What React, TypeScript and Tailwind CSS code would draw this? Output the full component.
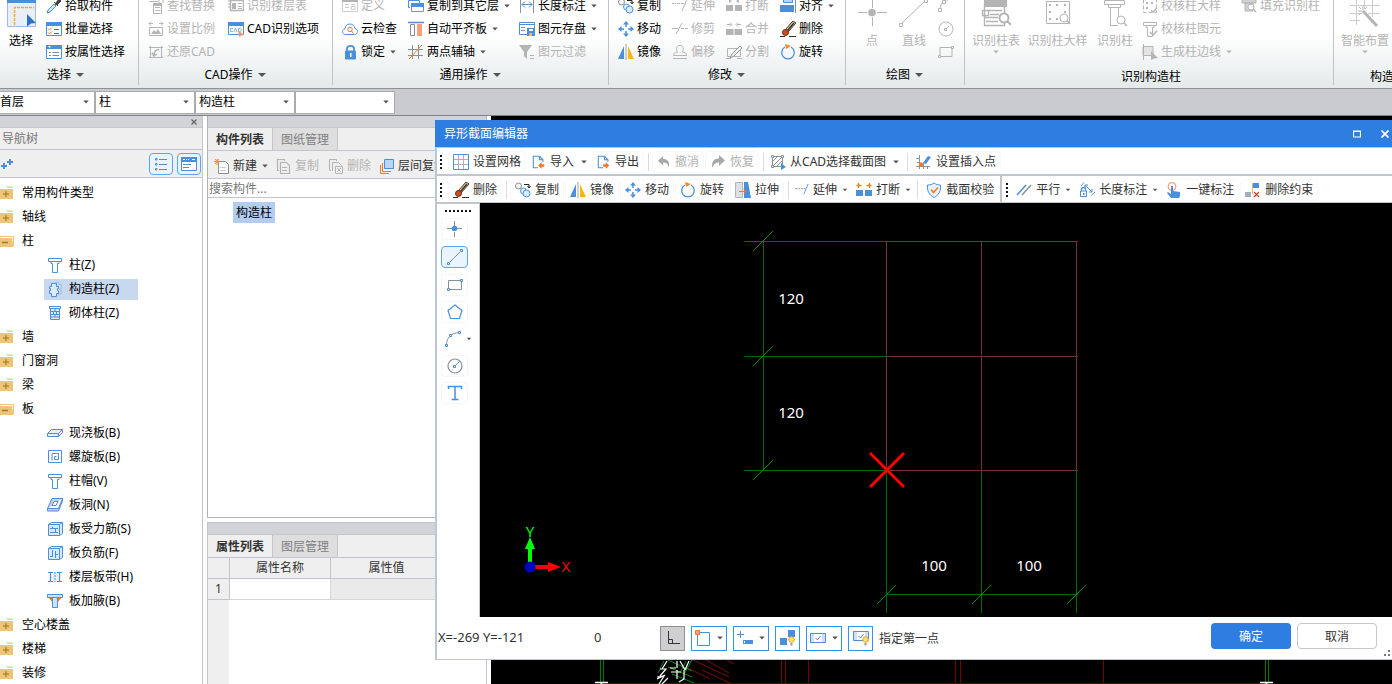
import { ReactNode } from 'react';
import clsx from 'clsx';

const BLUE = '#4a8fdc';
const GRAY = '#b4b4b4';
const SLATE = '#86919c';
const ORANGE = '#f0792a';

const column = (
  <>
    <path d="M1.5 1.5h13v3h-13z" fill="none" />
    <path d="M4 4.5v2h1.500v9h5v-9H12v-2" fill="none" />
  </>
);

const grid = <path d="M1 5.500h14M1 10.500h14M5.500 1v14M10.500 1v14" stroke="#a9b0b8" />;

// all of these are drawn in a 16x16 box
const icons: Record<string, ReactNode> = {
  picker: (
    <>
      <path d="M1 15l1-3 6-6 2 2-6 6z" fill="#dfe7f0" stroke={BLUE} />
      <path d="M8 4l4 4M9 6l4-5 2 2-4 4z" fill="#444" stroke="#444" />
    </>
  ),
  batch: (
    <>
      <path d="M.5 2.500h15v12H.5z" fill="#fff" stroke={BLUE} />
      <path d="M0 1h16v4H0z" fill={BLUE} />
      <path d="M2 7.500l1.500 1.500L6 6.500M2 11.500l1.500 1.500L6 10.500" stroke={ORANGE} fill="none" />
      <path d="M8 8.500h5M8 12.500h5" stroke="#667" />
    </>
  ),
  property: (
    <>
      <path d="M.5 2.500h15v12H.5z" fill="#fff" stroke={BLUE} />
      <path d="M0 1h16v4H0z" fill={BLUE} />
      <path d="M2 2h3L3.500 4z" fill="#fff" />
      <path d="M3 8.500h2M3 11.500h2M6.500 8.500H13M6.500 11.500H13" stroke="#789" />
    </>
  ),
  find: (
    <>
      <path d="M5.500 5.500h8v10h-8zM7 9.500h5M7 12.500h5M7 7.500h5M1 3.500h9M11 1v4M15 1v4" stroke={GRAY} fill="none" />
      <path d="M5 5h9v3H5z" fill={GRAY} />
    </>
  ),
  scale: (
    <>
      <path d="M1 2.500h4M11 2.500h4M3 .5L1 2.500l2 2M13 .5l2 2-2 2M1.500 6.500h13v8h-13z" stroke={GRAY} fill="none" />
      <path d="M3 13l3-4 2 2 2-3 3 5z" fill={GRAY} />
    </>
  ),
  restore: (
    <>
      <path d="M2.500 2v12M13.500 2v12M1 3.500h14M1 13.500h14" stroke={GRAY} fill="none" />
      <path d="M11 5.500c-3 0-5 2-5 6M4 9l2 3 3-2" stroke={GRAY} strokeWidth="1.500" fill="none" />
    </>
  ),
  floorTable: (
    <>
      <path d="M2.500 2.500h13v10h-13z" stroke={GRAY} fill="none" strokeWidth="1.500" />
      <path d="M0 3h2M0 6h2M0 9h2M10 5.500h4M10 8.500h4M10 10.500h4" stroke={GRAY} />
      <path d="M4 5h4v6H4z" fill={GRAY} />
    </>
  ),
  cadOptions: (
    <>
      <path d="M.5 3.500h15v10H.5z" fill="#fff" stroke={BLUE} />
      <path d="M0 1h16v4H0z" fill={BLUE} />
      <path d="M5 7.500H2.500v3H5M6 11l1.500-4L9 11M10.500 7.500v3h2l1-1.500-1-1.500z" stroke="#86b4ea" fill="none" />
      <path d="M10 9l6 5-3 .5-1.500 2z" fill="#fb9066" />
    </>
  ),
  define: (
    <>
      <path d="M.5 2.500h15v11H.5zM3 6.500h4M3 9.500h4M9 6.500h4M9 8.500h4v3H9z" stroke="#cdcdcd" fill="none" />
      <path d="M0 1h16v3H0z" fill={GRAY} />
    </>
  ),
  cloud: (
    <>
      <path d="M4 13.500C1.500 13.500.5 12 .5 10.500S2 8 3 8c0-3 2-5 5-5s4.500 2 5 4.500c1.500 0 2.500 1.500 2.500 3s-1 3-3 3z" fill="#fff" stroke={BLUE} />
      <circle cx="8" cy="8.500" r="2.200" fill="none" stroke={ORANGE} />
      <path d="M9.500 10l2 2.500" stroke={ORANGE} />
    </>
  ),
  lock: (
    <>
      <path d="M5 7V4.500C5 1 12 1 12 4.500V7" stroke={BLUE} strokeWidth="1.800" fill="none" />
      <rect x="3" y="6.500" width="11" height="9" rx="1" fill={BLUE} />
      <path d="M8 9h1.500v4H8z" fill="#fff" />
    </>
  ),
  copyFloor: (
    <>
      <path d="M.5 2.500h11v3M.5 2.500v7H2" stroke={BLUE} fill="none" />
      <path d="M3.500 5.500h12v8h-12z" fill="#fff" stroke={SLATE} />
      <path d="M3 5h13v4H3z" fill={BLUE} />
    </>
  ),
  alignSlab: (
    <>
      <path d="M0 1.500h16" stroke={BLUE} strokeWidth="1.500" />
      <path d="M2.500 3.500h4v11h-4z" stroke={SLATE} fill="none" />
      <path d="M9 3h5v12H9z" fill="#fb9f78" />
    </>
  ),
  axis: (
    <>
      <path d="M4.500 1v14M10.500 1v14M0 5.500h15M0 11.500h15" stroke={SLATE} />
      <path d="M1 15L14 1" stroke={ORANGE} />
    </>
  ),
  dimension: (
    <>
      <path d="M1.500 1v14M14.500 1v14" stroke={SLATE} />
      <path d="M3 6.500h10M6 3.500l-3 3 3 3M10 3.500l3 3-3 3" stroke={BLUE} fill="none" />
    </>
  ),
  save: (
    <>
      <path d="M.5 1.500h15v12H.5zM0 3.500h16" stroke={BLUE} fill="#fff" />
      <path d="M2 6.500h4M2 9.500h4" stroke={SLATE} />
      <path d="M8 7h8v8H8z" fill={BLUE} />
      <path d="M10 8h4v2h-4z" fill="#fff" />
      <path d="M10 12h3v3h-3z" fill="#f5b06a" />
    </>
  ),
  filter: (
    <>
      <path d="M0 1h13L8 8v7l-3-3V8z" fill={GRAY} />
      <path d="M11 11.500h4M11 14.500h4" stroke={GRAY} />
    </>
  ),
  copy: (
    <>
      <circle cx="3.500" cy="4" r="3" fill="#f4f4f4" stroke={SLATE} />
      <circle cx="8.500" cy="9" r="3" fill="#eaf3fc" stroke={BLUE} />
      <circle cx="11.500" cy="11.500" r="3.500" fill="#d8ebfb" stroke={BLUE} />
      <path d="M9 2.500h5V5M12.500 4l1.500 2 1.500-2" stroke="#222" fill="none" />
    </>
  ),
  move: (
    <>
      <path d="M8 0l3 3.500H5zM8 16l3-3.500H5zM0 8l3.500-3v6zM16 8l-3.500-3v6z" fill={BLUE} />
      <path d="M8 3v3M8 10v3M3 8h3M10 8h3" stroke={BLUE} strokeWidth="1.500" />
    </>
  ),
  mirror: (
    <>
      <path d="M6 2v13H0z" fill={BLUE} />
      <path d="M8 0v16" stroke="#9aa3ad" />
      <path d="M10 2v13h6z" fill="#fbb515" />
    </>
  ),
  extendGray: <path d="M0 5.500h4M5 5.500h3M9 5.500h3M10 13l5-12" stroke={GRAY} fill="none" />,
  trim: <path d="M0 7.500h6M9 7.500h3M13 7.500h3M4 13l6-11" stroke={GRAY} fill="none" />,
  offset: (
    <path d="M1 14.500h14M1.500 11.500c0-3 2-3 4-3C3 4 5 1.500 8 1.500S12 4 10.500 8c2 .5 4 .5 4 3.500zM4 11.500h8" stroke={GRAY} fill="none" />
  ),
  breakGray: <path d="M0 7h7v6H0zM9 7h7v6H9zM3 1l3 2-3 2zM13 1l-3 2 3 2zM0 2.500h4M12 2.500h4" fill={GRAY} />,
  merge: (
    <>
      <path d="M0 8h7.500v6H0zM8.500 8H16v6H8.500z" fill={GRAY} />
      <path d="M1 3.500h4M11 3.500h4M4 1.500l2 2-2 2M12 1.500l-2 2 2 2" stroke={GRAY} fill="none" />
    </>
  ),
  split: (
    <>
      <path d="M1.500 4.500h13v8h-13zM0 14.500h5M11 14.500h5" stroke={GRAY} fill="none" />
      <path d="M4 14l2-4 8-8 2 2-8 8z" fill="#eee" stroke="#999" />
    </>
  ),
  align: (
    <>
      <path d="M3.500.5h9v4h-9z" fill="#b7d3f5" stroke={BLUE} />
      <path d="M0 7h14v7H0z" fill={BLUE} />
      <path d="M15.500 0v15" stroke={SLATE} />
    </>
  ),
  erase: (
    <>
      <path d="M0 15.500h5M9 15.500h7" stroke="#333" />
      <path d="M5 9l8-9 3 2-8 9z" fill="#f1c79a" stroke="#4a3728" />
      <path d="M7.500 9.500L14 2" stroke="#333" strokeWidth="1.500" />
      <circle cx="5.500" cy="11.500" r="3" fill="#c9501f" stroke="#6b2a12" />
    </>
  ),
  rotate: (
    <>
      <path d="M5 3a6.300 6.300 0 1 0 6 0" fill="none" stroke={BLUE} strokeWidth="1.300" />
      <path d="M5 0l6 2-5 3z" fill="#f08a28" />
    </>
  ),
  smallArc: (
    <>
      <path d="M2 12C2 6 5 2 14 1" stroke={GRAY} fill="none" />
      <path d="M.5 10.500h3v3h-3zM4.500 2.500h3v3h-3z" fill="#fff" stroke={GRAY} />
    </>
  ),
  smallCircle: (
    <>
      <circle cx="8" cy="8" r="7" stroke={GRAY} fill="none" />
      <path d="M8 8l3-3M6.500 7.500h2v2h-2z" stroke={GRAY} fill="none" />
    </>
  ),
  smallRect: (
    <>
      <path d="M2 3.500h12v9H2z" stroke={GRAY} fill="none" />
      <path d="M.5 11.500h2v2h-2zM13.500 2.500h2v2h-2z" fill="#fff" stroke={GRAY} />
    </>
  ),
  checkDetail: (
    <>
      <path d="M1.500 1.500h13v13h-13z" stroke={GRAY} strokeDasharray="4 2" fill="none" />
      <path d="M4 4h2v2H4zM9 4h2v2H9zM4 9h2v2H4z" fill={GRAY} />
      <path d="M9 12l2 2 4-4" stroke={GRAY} strokeWidth="1.500" fill="none" />
    </>
  ),
  checkElement: (
    <>
      <g stroke={GRAY}>{column}</g>
      <path d="M8 11l3 3 4-4" stroke={GRAY} strokeWidth="1.500" fill="none" />
    </>
  ),
  edge: (
    <>
      <path d="M1.500 0v16M1 2.500h10v9H1z" stroke={GRAY} fill="#e4e4e4" />
      <path d="M9 7l7 7-4 .5-3 1.500z" fill={GRAY} />
    </>
  ),
  fillColumn: (
    <>
      <path d="M1 1h14v4H1zM4 5h8v8H4z" fill="#d2d2d2" stroke={GRAY} />
      <circle cx="10" cy="9" r="3" fill="#fff" stroke={GRAY} />
      <path d="M12 11l3 3" stroke={GRAY} strokeWidth="1.500" />
    </>
  ),
  column: <g stroke={BLUE}>{column}</g>,
  structColumn: (
    <>
      <path d="M8 1.500h4v2h2.500v4H13v2h1.500v3H12v2" stroke="#9cc4ee" fill="none" />
      <path d="M4.500 2.500h5v3h2v2h-1v2h1v3h-2v3h-5v-3h-2v-3h1v-2h-1v-2h2z" stroke={BLUE} fill="#dbe9f8" />
    </>
  ),
  masonry: (
    <>
      <path d="M3.500 3.500h9v11h-9z" stroke={BLUE} fill="#dceafa" />
      <path d="M2.500 1.500h11v2h-11z" stroke={BLUE} fill="#fff" />
      <path d="M4 6.500h8M4 9.500h8M4 12h8M8 4v2M6.500 7v2M9.500 7v2M8 10v2" stroke={BLUE} />
    </>
  ),
  slab: <path d="M.5 8.500l4-4h11l-4 4zM.5 8.500v3h11v-3M11.500 11.500l4-4v-3" stroke={BLUE} fill="#e3effb" />,
  spiral: <path d="M1.500 1.500h13v12h-13zM5 11.500V4.500h6.500v6H7.500v-3h2" stroke={BLUE} fill="none" />,
  hole: (
    <>
      <path d="M5 1.500h10.500l-4 10H.5zM.5 11.500v2.500h11l4-10V1.500" stroke={BLUE} fill="#b8d4f3" />
      <path d="M7 4.500h4l-2 4H5z" fill="#fff" stroke={BLUE} />
    </>
  ),
  rebar: (
    <>
      <path d="M1.500 3.500h11v11h-11zM1.500 3.500l3-2h11v11l-3 2M12.500 3.500l3-2" stroke={BLUE} fill="#dbe9f8" />
      <path d="M3 7.500h8M3 11.500h8M5.500 5.500v2M8.500 7.500v4" stroke={BLUE} />
    </>
  ),
  negRebar: (
    <>
      <path d="M1.500 3.500h11v11h-11zM1.500 3.500l3-2h11v11l-3 2M12.500 3.500l3-2" stroke={BLUE} fill="#dbe9f8" />
      <path d="M5.500 5v7M8.500 6v7M3 11.500h3M8 9.500h3" stroke={BLUE} />
    </>
  ),
  strip: (
    <>
      <path d="M2 3h12v10H2z" fill="#e6f0fb" />
      <path d="M1 3.500h5M10 3.500h5M1 12.500h5M10 12.500h5M3.500 3v10M12.500 3v10" stroke={BLUE} />
      <path d="M8 3v10" stroke={BLUE} strokeDasharray="2 1" />
    </>
  ),
  haunch: (
    <>
      <path d="M1 4l5 6V4zM15 4l-5 6V4z" fill="#f57c10" />
      <path d="M.5 1.500h15v3h-15zM5.500 4.500h5v10h-5z" stroke={BLUE} fill="#cfe2f7" />
    </>
  ),
  newItem: (
    <>
      <path d="M4.500 3.500h7l3 3v9h-10z" fill="#fff" stroke={SLATE} />
      <path d="M6 9.500h6M6 12.500h6" stroke="#c5ccd4" />
      <path d="M3 1v6M0 3.500h6M1 1l4 5M5 1L1 6" stroke="#f0922a" />
    </>
  ),
  copyDoc: (
    <path d="M3 12.500H1.500v-11h7V3M4.500 4.500h6l3 3v8h-9zM6 9.500h5M6 12.500h5" stroke={GRAY} strokeWidth="1.200" fill="none" />
  ),
  deleteDoc: (
    <path d="M3 12.500H1.500v-11h7V3M4.500 13V4.500h6l3 3M7.500 8.500h7v7h-7zM9 10l4 4M13 10l-4 4" stroke={GRAY} fill="none" />
  ),
  layers: (
    <>
      <path d="M1.500 7v8.500H10M3.500 5v8.500H12" stroke={ORANGE} fill="none" />
      <path d="M5.500 1.500h9v9h-9z" fill="#b9d6f6" stroke={BLUE} />
    </>
  ),
  grid: (
    <>
      {grid}
      <path d="M.5.5h15v15H.5z" stroke={BLUE} fill="none" />
    </>
  ),
  importDoc: (
    <>
      <path d="M7 14.500H1.500v-13h7l4 4V8M8.500 1.500v4h4" stroke={BLUE} fill="none" strokeWidth="1.200" />
      <path d="M7 12l4-4v2.500h3v3h-3V16z" fill={ORANGE} />
    </>
  ),
  exportDoc: (
    <>
      <path d="M7 14.500H1.500v-13h7l4 4V8M8.500 1.500v4h4" stroke={BLUE} fill="none" strokeWidth="1.200" />
      <path d="M14 12l-4-4v2.500H7v3h3V16z" fill={ORANGE} />
    </>
  ),
  undo: <path d="M7 1v3.500c5 0 8 3 6.500 9.500-1-4-3-5.500-6.500-5.500V12L1 6.500z" fill="#a9a9a9" />,
  redo: <path d="M9 1v3.500c-5 0-8 3-6.500 9.500 1-4 3-5.500 6.500-5.500V12l6-5.500z" fill="#a9a9a9" />,
  cadSection: (
    <>
      <path d="M2.500 2.500h10v10h-10z" fill="none" stroke={SLATE} />
      <path d="M3 7l4-4M3 12l9-9M7 12l5-5" stroke={SLATE} />
      <path d="M1.500 1.500h2v2h-2zM11.500 1.500h2v2h-2zM1.500 11.500h2v2h-2z" fill="#fff" stroke={SLATE} />
      <path d="M11 9l5 4-5 3z" fill={BLUE} />
    </>
  ),
  insertPoint: (
    <>
      <path d="M3.500 1v14M0 12.500h14M0 4.500h4M7.500 9v6M11.500 12v3M1 8.500h3" stroke={SLATE} />
      <path d="M7 9l5-7 3 1-5 7z" fill={BLUE} />
      <circle cx="5" cy="10.500" r="2.200" fill={ORANGE} />
    </>
  ),
  stretch: (
    <>
      <path d="M.5.5h7v15h-7z" fill="#dde1e6" stroke="#aeb6bf" />
      <path d="M9 0h4l3 16H9z" fill={BLUE} />
      <path d="M4 9.500h7M8.500 7l3 2.500-3 2.500" stroke={ORANGE} fill="none" />
    </>
  ),
  extend: (
    <>
      <path d="M0 6.500h3M4 6.500h2M7 6.500h2M10 6.500h2" stroke={SLATE} />
      <path d="M10 13l5-12" stroke={BLUE} />
    </>
  ),
  breakLine: (
    <>
      <path d="M0 8h7v6H0zM9 8h7v6H9z" fill={BLUE} />
      <path d="M.5 3.500h5M2.500 1v5M10.500 3.500h5M13.500 1v5" stroke="#d98a1e" strokeWidth="1.400" />
    </>
  ),
  shield: (
    <>
      <path d="M8 1c2 1.500 4 2 6.500 2 .5 6-1.500 10-6.500 12.500C3 13 1 9 1.500 3 4 3 6 2.500 8 1z" fill="#eaf3fc" stroke={BLUE} />
      <path d="M5 7.500l2.500 3L12 5.500" stroke={ORANGE} strokeWidth="1.500" fill="none" />
    </>
  ),
  parallel: (
    <>
      <path d="M1 13L10 3" stroke={BLUE} strokeWidth="1.500" />
      <path d="M6 13l9-10" stroke={SLATE} strokeWidth="1.500" />
    </>
  ),
  lockDim: (
    <>
      <path d="M2.500 9V7c0-2 4-2 4 0v2" stroke={BLUE} fill="none" strokeWidth="1.300" />
      <path d="M1.500 9h6v5.500h-6z" stroke={BLUE} fill="#fff" />
      <path d="M4 11h1.500v2H4z" fill={BLUE} />
      <path d="M2 4l3-3.500M12 13.500l4-3.500" stroke={SLATE} />
      <path d="M6 3l7 7M6 6V3h3M13 7v3h-3" stroke={BLUE} fill="none" />
    </>
  ),
  oneKey: (
    <>
      <circle cx="6" cy="4.500" r="3.800" fill="none" stroke="#f5a07c" strokeWidth="1.300" />
      <path d="M5 4h2v5l7 1v4l-1 2H5l-4-5 1-1 3 2z" fill={BLUE} />
    </>
  ),
  removeConstraint: (
    <>
      <path d="M7.500 1v11" stroke="#f0b070" />
      <path d="M8 1h6v5H8z" fill={BLUE} />
      <path d="M0 10h6v5H0z" fill="#a6adb6" />
      <path d="M9 10l5 5M14 10l-5 5" stroke="#d94030" strokeWidth="1.300" />
    </>
  ),
  point: (
    <>
      <path d="M7.500 0v5M7.500 11v5M0 7.500h5M10 7.500h5" stroke={SLATE} />
      <circle cx="7.500" cy="7.500" r="2.800" fill={BLUE} />
    </>
  ),
  line: (
    <>
      <path d="M3 13L13 3" stroke={SLATE} />
      <path d="M.5 13.500h2v2h-2zM13.500.5h2v2h-2z" fill="#fff" stroke={BLUE} />
    </>
  ),
  rect: (
    <>
      <path d="M1.500 3.500h13v9h-13z" stroke={SLATE} fill="none" />
      <path d="M.5 11.500h2v2h-2zM13.500 2.500h2v2h-2z" fill="#fff" stroke={BLUE} />
    </>
  ),
  pentagon: <path d="M8 1l7 5.500-2.500 8h-9L1 6.500z" stroke={BLUE} strokeWidth="1.200" fill="none" />,
  arc: (
    <>
      <path d="M1.500 14C1.500 7 6 2 14 1.500" stroke={SLATE} fill="none" />
      <path d="M.5 13.500h2v2h-2zM4.500 3.500h2v2h-2zM13.500.5h2v2h-2z" fill="#fff" stroke={BLUE} />
    </>
  ),
  circle: (
    <>
      <circle cx="8" cy="8" r="7" stroke={SLATE} fill="none" strokeWidth="1.200" />
      <path d="M8.500 7.500l4-4M6.500 7.500h2v2h-2z" stroke={BLUE} fill="none" />
    </>
  ),
  text: <path d="M1.500 4V1.500h13V4M8 1.500v13M4.500 14.500h7" stroke={BLUE} strokeWidth="1.500" fill="none" />,
  corner: <path d="M3.500 1v12.500H15M3.500 9.500h4v4" stroke="#333" fill="none" />,
  snapBox: (
    <>
      <path d="M2.500 2.500h12v13h-12z" stroke={BLUE} fill="none" />
      <path d="M.5.5h4v4h-4z" fill="#fb9f78" stroke={ORANGE} />
    </>
  ),
  inputPoint: (
    <>
      <path d="M3.500 1v7M0 4.500h7" stroke={BLUE} />
      <path d="M6 10h10v4H6z" fill={BLUE} />
      <path d="M7 11h1v2H7z" fill="#fff" />
    </>
  ),
  blocks: (
    <>
      <path d="M8 0h7v7H8zM0 8h7v7H0z" fill={BLUE} />
      <circle cx="11.500" cy="9.500" r="2.800" fill="#ffe27a" stroke="#e0a52c" />
      <path d="M10.500 13h2v2.500h-2z" fill="#999" />
    </>
  ),
  checkBox: (
    <>
      <path d="M.5 3.500h15v9H.5z" stroke={BLUE} fill="#cfe0f4" />
      <path d="M4 4h8v8H4z" fill="#fff" />
      <path d="M5.500 8l2 2 3-4" stroke={BLUE} fill="none" />
    </>
  ),
  checkBulb: (
    <>
      <path d="M.5 1.500h15v9H.5z" stroke={BLUE} fill="#cfe0f4" />
      <path d="M4 2h8v8H4z" fill="#fff" />
      <path d="M5.500 6l2 2 3-4" stroke={BLUE} fill="none" />
      <circle cx="12.500" cy="9.500" r="2.800" fill="#ffe27a" stroke="#e0a52c" />
      <path d="M11.500 13h2v2.500h-2z" fill="#999" />
    </>
  ),
};

// 30x30 box
const bigIcons: Record<string, ReactNode> = {
  select: (
    <>
      <path d="M1.500 3.500h28v26h-28z" fill="#e9eef8" stroke="#9fbbe0" />
      <path d="M1 0h29v6H1z" fill={BLUE} />
      <path d="M8.500 28V10.500H28" stroke="#eeb02a" strokeDasharray="3 1" strokeWidth="1.500" fill="none" />
      <path d="M21 17l9 9-5 .5-4 3z" fill="#2f72c4" />
    </>
  ),
  point: (
    <>
      <path d="M15.500 0v11M15.500 20v9M1 15.500h9M20 15.500h10" stroke={GRAY} />
      <circle cx="15" cy="15.500" r="3.800" fill={GRAY} />
    </>
  ),
  line: (
    <>
      <path d="M2 27L27 3" stroke={GRAY} />
      <path d="M.5 26.500h3v3h-3zM25.500 2.500h3v3h-3z" fill="#fff" stroke={GRAY} />
    </>
  ),
  table: (
    <>
      <path d="M3.500 6v22.500h20V6M1.500 13.500h6v5h-6zM7 13.500h14M9 17.500h9M3 20.500h14M5 24.500h12" stroke={GRAY} fill="none" strokeWidth="1.400" />
      <path d="M3 3h23v7H3z" fill={GRAY} />
      <circle cx="23" cy="21" r="4.500" fill="#fff" stroke={GRAY} strokeWidth="2" />
      <path d="M26 24l4 4" stroke={GRAY} strokeWidth="2" />
    </>
  ),
  detail: (
    <>
      <path d="M3.500 4.500h23v22h-23z" stroke={GRAY} fill="none" />
      <path d="M6 7h2v2H6zM13 7h2v2h-2zM21 7h2v2h-2zM6 14h2v2H6zM6 21h2v2H6zM13 21h2v2h-2zM21 14h2v2h-2z" fill={GRAY} />
      <circle cx="21" cy="21" r="4" fill="#fff" stroke={GRAY} />
      <path d="M24 24l3 3" stroke={GRAY} strokeWidth="1.500" />
    </>
  ),
  column: (
    <>
      <path d="M4.500 3.500h20v4h-20zM8.500 7.500h12v3h-12zM10.500 10.500V28.500H18M18.500 10.500V20" stroke={GRAY} fill="none" />
      <circle cx="21" cy="23" r="4" fill="#fff" stroke={GRAY} />
      <path d="M24 26l3 3" stroke={GRAY} strokeWidth="1.500" />
    </>
  ),
  smart: (
    <>
      <path d="M6.500 0v28M14.500 0v12M22.500 0v20M0 8.500h30M0 16.500h12M18 16.500h12M0 23.500h10" stroke="#ccc" />
      <path d="M13 14l14 15" stroke={GRAY} strokeWidth="3" />
      <path d="M13 9v4M8 14h4M17 10l-2 2M9 10l2 2M9 18l2-2" stroke={GRAY} />
    </>
  ),
};

type IconProps = { name: string; className?: string };

const Icon = ({ name, className = 'size-4' }: IconProps) => (
  <svg viewBox="0 0 16 16" className={clsx('shrink-0', className)} aria-hidden="true">
    {icons[name]}
  </svg>
);

const Caret = ({ className = 'w-2.5 text-[#555]' }: { className?: string }) => (
  <svg viewBox="0 0 10 6" className={clsx('h-1.5 shrink-0', className)} aria-hidden="true">
    <path d="M2.300 1.500h5.400L5 4.500z" fill="currentColor" />
  </svg>
);

type ToolProps = { icon: string; label: string; disabled?: boolean; caret?: boolean };

const RibbonTool = ({ icon, label, disabled, caret }: ToolProps) => (
  <button
    type="button"
    disabled={disabled}
    className="flex h-[23px] items-center gap-[3px] whitespace-nowrap disabled:text-[#b4b4b4]"
  >
    <Icon name={icon} />
    {label}
    {caret && <Caret className={clsx('w-2.5', disabled ? 'text-[#b4b4b4]' : 'text-[#555]')} />}
  </button>
);

const BigTool = ({ icon, label, disabled, caret, className }: ToolProps & { className: string }) => (
  <button
    type="button"
    disabled={disabled}
    className={clsx(
      'flex h-[69px] shrink-0 flex-col items-center whitespace-nowrap pt-[3px] disabled:text-[#b4b4b4]',
      className,
    )}
  >
    <svg viewBox="0 0 30 30" className="size-[30px]" aria-hidden="true">
      {bigIcons[icon]}
    </svg>
    <span className="mt-1.5">{label}</span>
    {caret && <Caret className="w-2.5 text-[#b4b4b4]" />}
  </button>
);

type GroupProps = {
  label: string;
  caret?: boolean;
  className: string;
  labelClass?: string;
  children: ReactNode;
};

const RibbonGroup = ({ label, caret = true, className, labelClass = 'justify-center pt-0.5', children }: GroupProps) => (
  <section className={clsx('flex shrink-0 flex-col justify-end border-r border-[#bfc3c6]', className)}>
    <div className="flex shrink-0">{children}</div>
    <div className={clsx('flex h-[22px] shrink-0 items-center gap-1 whitespace-nowrap', labelClass)}>
      {label}
      {caret && (
        <svg viewBox="0 0 10 6" className="h-1.5 w-2.5" aria-hidden="true">
          <path d="M1 1h8L5 5z" fill="#555" />
        </svg>
      )}
    </div>
  </section>
);

const ToolColumn = ({ tools, className }: { tools: ToolProps[]; className?: string }) => (
  <div className={clsx('flex flex-col items-start', className)}>
    {tools.map((tool) => (
      <RibbonTool key={tool.label} {...tool} />
    ))}
  </div>
);

const Ribbon = () => (
  <header className="flex h-[89px] shrink-0 overflow-hidden border-b border-[#8d9095] bg-linear-to-b from-white from-40% to-[#e4eaea] pb-[3px]">
    <RibbonGroup label="选择" className="w-[139px]" labelClass="justify-center pr-1.5 pt-0.5">
      <BigTool icon="select" label="选择" className="w-[42px]" />
      <ToolColumn
        className="ml-1"
        tools={[
          { icon: 'picker', label: '拾取构件' },
          { icon: 'batch', label: '批量选择' },
          { icon: 'property', label: '按属性选择' },
        ]}
      />
    </RibbonGroup>

    <RibbonGroup label="CAD操作" className="w-[194px]">
      <ToolColumn
        className="ml-[9px]"
        tools={[
          { icon: 'find', label: '查找替换', disabled: true },
          { icon: 'scale', label: '设置比例', disabled: true },
          { icon: 'restore', label: '还原CAD', disabled: true },
        ]}
      />
      <ToolColumn
        className="ml-[13px]"
        tools={[
          { icon: 'floorTable', label: '识别楼层表', disabled: true },
          { icon: 'cadOptions', label: 'CAD识别选项' },
        ]}
      />
    </RibbonGroup>

    <RibbonGroup label="通用操作" className="w-[276px]">
      <ToolColumn
        className="ml-[9px]"
        tools={[
          { icon: 'define', label: '定义', disabled: true },
          { icon: 'cloud', label: '云检查' },
          { icon: 'lock', label: '锁定', caret: true },
        ]}
      />
      <ToolColumn
        className="ml-2.5"
        tools={[
          { icon: 'copyFloor', label: '复制到其它层', caret: true },
          { icon: 'alignSlab', label: '自动平齐板', caret: true },
          { icon: 'axis', label: '两点辅轴', caret: true },
        ]}
      />
      <ToolColumn
        className="ml-[7px]"
        tools={[
          { icon: 'dimension', label: '长度标注', caret: true },
          { icon: 'save', label: '图元存盘', caret: true },
          { icon: 'filter', label: '图元过滤', disabled: true },
        ]}
      />
    </RibbonGroup>

    <RibbonGroup label="修改" className="w-[237px]">
      <div className="ml-[9px] flex gap-[11px]">
        <ToolColumn
          tools={[
            { icon: 'copy', label: '复制' },
            { icon: 'move', label: '移动' },
            { icon: 'mirror', label: '镜像' },
          ]}
        />
        <ToolColumn
          tools={[
            { icon: 'extendGray', label: '延伸', disabled: true },
            { icon: 'trim', label: '修剪', disabled: true },
            { icon: 'offset', label: '偏移', disabled: true },
          ]}
        />
        <ToolColumn
          tools={[
            { icon: 'breakGray', label: '打断', disabled: true },
            { icon: 'merge', label: '合并', disabled: true },
            { icon: 'split', label: '分割', disabled: true },
          ]}
        />
        <ToolColumn
          tools={[
            { icon: 'align', label: '对齐', caret: true },
            { icon: 'erase', label: '删除' },
            { icon: 'rotate', label: '旋转' },
          ]}
        />
      </div>
    </RibbonGroup>

    <RibbonGroup label="绘图" className="w-[119px]">
      <BigTool icon="point" label="点" className="ml-1 w-11" disabled />
      <BigTool icon="line" label="直线" className="w-10" disabled />
      <div className="ml-1 flex flex-col">
        {[
          ['smallArc', '弧线'],
          ['smallCircle', '圆'],
          ['smallRect', '矩形'],
        ].map(([icon, title]) => (
          <button key={icon} type="button" disabled aria-label={title} className="flex h-[23px] items-center">
            <Icon name={icon} />
          </button>
        ))}
      </div>
    </RibbonGroup>

    <RibbonGroup label="识别构造柱" caret={false} className="w-[369px]" labelClass="justify-center pl-1 pt-1.5">
      <BigTool icon="table" label="识别柱表" className="w-[62px]" disabled caret />
      <BigTool icon="detail" label="识别柱大样" className="w-[61px]" disabled />
      <BigTool icon="column" label="识别柱" className="w-[54px]" disabled />
      <ToolColumn
        tools={[
          { icon: 'checkDetail', label: '校核柱大样', disabled: true },
          { icon: 'checkElement', label: '校核柱图元', disabled: true },
          { icon: 'edge', label: '生成柱边线', disabled: true, caret: true },
        ]}
      />
      <ToolColumn
        className="ml-[7px]"
        tools={[{ icon: 'fillColumn', label: '填充识别柱', disabled: true }]}
      />
    </RibbonGroup>

    <RibbonGroup label="构造" caret={false} className="grow border-r-0" labelClass="pl-9 pt-1.5">
      <BigTool icon="smart" label="智能布置" className="w-[62px]" disabled caret />
    </RibbonGroup>
  </header>
);

const selectors = [
  { title: '楼层', value: '首层', className: 'w-[95px]' },
  { title: '构件类别', value: '柱', className: 'w-[100px]' },
  { title: '构件类型', value: '构造柱', className: 'w-[100px]' },
  { title: '构件', value: '', className: 'w-[100px]' },
];

const SelectorBar = () => (
  <div className="flex h-[27px] shrink-0 items-center border-b border-[#7f8388] bg-[#cacbd0]">
    {selectors.map(({ title, value, className }, index) => (
      <div key={title} className={clsx('grid items-center', className)}>
        <select
          aria-label={title}
          className={clsx(
            'col-start-1 row-start-1 h-[23px] w-full appearance-none border border-[#ababab] bg-white',
            index === 0 ? 'border-l-0 pl-0' : 'pl-[3px]',
          )}
        >
          <option>{value}</option>
        </select>
        <Caret className="pointer-events-none col-start-1 row-start-1 mr-1 w-2.5 justify-self-end text-[#555]" />
      </div>
    ))}
  </div>
);

type TreeNode = { label: string; icon?: string; open?: boolean; selected?: boolean };

const tree: TreeNode[] = [
  { label: '常用构件类型' },
  { label: '轴线' },
  { label: '柱', open: true },
  { label: '柱(Z)', icon: 'column' },
  { label: '构造柱(Z)', icon: 'structColumn', selected: true },
  { label: '砌体柱(Z)', icon: 'masonry' },
  { label: '墙' },
  { label: '门窗洞' },
  { label: '梁' },
  { label: '板', open: true },
  { label: '现浇板(B)', icon: 'slab' },
  { label: '螺旋板(B)', icon: 'spiral' },
  { label: '柱帽(V)', icon: 'column' },
  { label: '板洞(N)', icon: 'hole' },
  { label: '板受力筋(S)', icon: 'rebar' },
  { label: '板负筋(F)', icon: 'negRebar' },
  { label: '楼层板带(H)', icon: 'strip' },
  { label: '板加腋(B)', icon: 'haunch' },
  { label: '空心楼盖' },
  { label: '楼梯' },
  { label: '装修' },
];

const Folder = ({ open }: { open?: boolean }) => (
  <svg viewBox="0 0 14 14" className="size-3.5 shrink-0" aria-hidden="true">
    {open ? (
      <>
        <path d="M0 4V2.500h13.500V12" stroke="#eec47a" fill="none" />
        <path d="M0 4h12l1.500 9H0z" fill="#eec47a" />
        <path d="M2 8.500h6" stroke="#a5792a" strokeWidth="1.500" />
      </>
    ) : (
      <>
        <path d="M0 3h13v10H0zM6 1.500L7 .5h5l1 1.500z" fill="#eec47a" />
        <path d="M3 8h6M6 5v6" stroke="#b5862f" strokeWidth="1.500" />
      </>
    )}
  </svg>
);

const NavTree = () => (
  <aside className="flex w-[203px] shrink-0 flex-col border-r border-[#c3c5cc] bg-white">
    <div className="flex h-3 shrink-0 items-center justify-end border-b border-[#c6c7cf] bg-[#d2d3d9] pr-1">
      <button type="button" aria-label="关闭导航树">
        <svg viewBox="0 0 8 8" className="size-2" aria-hidden="true">
          <path d="M1.500 1.500l5 5M6.500 1.500l-5 5" stroke="#666" strokeWidth="1.300" />
        </svg>
      </button>
    </div>
    <h2 className="flex h-[22px] shrink-0 items-center border-b border-[#c3c5cc] bg-[#efefef] pl-0.5 text-[#777]">
      导航树
    </h2>
    <div className="flex h-7 shrink-0 items-center gap-1 border-b border-[#c3c5cc] bg-[#efefef] pr-px">
      <button type="button" aria-label="全部展开" className="mr-auto">
        <svg viewBox="0 0 14 12" className="h-3 w-3.5" aria-hidden="true">
          <path d="M1 8h6M4 5v6M7 4h6M10 1v6" stroke={BLUE} strokeWidth="2" />
        </svg>
      </button>
      <button type="button" aria-label="列表视图" className="flex h-[22px] w-6 items-center justify-center rounded-sm border border-[#58a6f2] bg-[#eaf4fe]">
        <svg viewBox="0 0 14 14" className="size-3.5" aria-hidden="true">
          <path d="M1.500 1.500h1.500v1.500H1.500zM1.500 6.500h1.500v1.500H1.500zM1.500 11.500h1.500v1.500H1.500zM5 2.500h8M5 7.500h8M5 12.500h8" stroke={BLUE} fill="none" />
        </svg>
      </button>
      <button type="button" aria-label="面板视图" className="flex h-[22px] w-6 items-center justify-center rounded-sm border border-[#58a6f2] bg-[#eaf4fe]">
        <svg viewBox="0 0 16 14" className="h-3.5 w-4" aria-hidden="true">
          <path d="M.5.5h15v13H.5z" fill="#fff" stroke={BLUE} />
          <path d="M0 0h16v5H0z" fill={BLUE} />
          <path d="M2 2.500h2M5 2.500h1M7 2.500h1M11 2.500h3" stroke="#fff" />
          <path d="M2 7.500h8M2 10.500h6" stroke={BLUE} />
        </svg>
      </button>
    </div>
    <ul className="min-h-0 grow overflow-hidden pt-[3px]">
      {tree.map(({ label, icon, open, selected }) => (
        <li key={label} className="flex h-6 items-center">
          {icon ? (
            <button
              type="button"
              className={clsx('ml-11 flex h-[21px] items-center gap-1.5 pl-[3px]', selected && 'w-[94px] bg-[#c8d8ef]')}
            >
              <Icon name={icon} />
              {label}
            </button>
          ) : (
            <button type="button" className="flex items-center gap-2" aria-expanded={!!open}>
              <Folder open={open} />
              {label}
            </button>
          )}
        </li>
      ))}
    </ul>
  </aside>
);

const PanelTabs = ({ tabs }: { tabs: string[] }) => (
  <div role="tablist" className="flex h-[23px] shrink-0 border-b border-[#c3c5cc] bg-[#efefef]">
    {tabs.map((tab, index) => (
      <button
        key={tab}
        type="button"
        role="tab"
        aria-selected={index === 0}
        className={clsx(
          'w-[65px] border-r border-[#c3c5cc] pt-px',
          index === 0 ? 'font-bold text-[#333]' : 'bg-[#dedede] text-[#808080]',
        )}
      >
        {tab}
      </button>
    ))}
  </div>
);

const PanelStrip = () => <div className="h-3 shrink-0 border-b border-[#c6c7cf] bg-[#d2d3d9]" />;

const ComponentPanels = () => (
  <div className="ml-1 flex w-[280px] shrink-0 flex-col overflow-hidden bg-white">
    <section className="flex h-[402px] flex-col border border-t-0 border-[#b0b2b8]">
      <PanelStrip />
      <PanelTabs tabs={['构件列表', '图纸管理']} />
      <div className="flex h-7 shrink-0 items-center gap-2.5 whitespace-nowrap border-b border-[#c3c5cc] bg-[#efefef] pl-1.5 pt-0.5 text-[#333]">
        <button type="button" className="flex items-center gap-[3px]">
          <Icon name="newItem" />
          新建
          <Caret />
        </button>
        <button type="button" disabled className="-ml-1 flex items-center gap-[3px] disabled:text-[#b4b4b4]">
          <Icon name="copyDoc" />
          复制
        </button>
        <button type="button" disabled className="-ml-px flex items-center gap-[3px] disabled:text-[#b4b4b4]">
          <Icon name="deleteDoc" />
          删除
        </button>
        <button type="button" className="-ml-0.5 flex items-center gap-[3px]">
          <Icon name="layers" />
          层间复制
        </button>
      </div>
      <input
        type="search"
        aria-label="搜索构件"
        placeholder="搜索构件..."
        className="h-[19px] shrink-0 border-b border-[#c3c5cc] bg-white pl-px outline-none placeholder:text-[#777]"
      />
      <ul className="pl-[25px] pt-1">
        <li className="w-fit bg-[#b3cdf0] px-[3px] leading-[21px]">构造柱</li>
      </ul>
    </section>

    <section className="mt-1 flex grow flex-col border-x border-t border-[#c3c5cc]">
      <PanelStrip />
      <PanelTabs tabs={['属性列表', '图层管理']} />
      <div className="flex grow flex-col bg-linear-to-r from-[#efefef] from-[21px] to-white to-[21px]">
        <table className="w-full table-fixed border-separate border-spacing-0 text-[#333]">
          <thead>
            <tr className="h-[21px] bg-[#efefef]">
              <th aria-label="序号" className="w-[22px] border-b border-r border-[#c3c5cc]" />
              <th className="w-[101px] border-b border-r border-[#c3c5cc] p-0 font-normal">属性名称</th>
              <th className="w-[112px] border-b border-r border-[#c3c5cc] p-0 font-normal">属性值</th>
              <th aria-label="附加" className="border-b border-[#c3c5cc]" />
            </tr>
          </thead>
          <tbody>
            <tr className="h-[21px]">
              <td className="border-b border-r border-[#c3c5cc] bg-[#efefef] p-0 text-center">1</td>
              <td className="border-b border-r border-[#d5d6da] bg-white" />
              <td className="border-b border-r border-[#d5d6da] bg-[#eaeaea]" />
              <td className="border-b border-[#d5d6da] bg-[#eaeaea]" />
            </tr>
          </tbody>
        </table>
      </div>
    </section>
  </div>
);

// main model view; only its lower edge shows under the editor window
const ModelView = () => (
  <main className="ml-1 flex min-w-0 grow items-end overflow-hidden bg-black">
    <svg width="901" height="24" viewBox="491 660 901 24" className="shrink-0" aria-hidden="true" fill="none">
      <path d="M600.500 660v24M603.500 660v24M1265.500 660v24M1268.500 660v24" stroke="#007a00" />
      <path d="M781.500 660v24M785.500 660v24M808.500 660v24M955.500 660v24M960.500 660v24M1103.500 660v24" stroke="#7d0000" />
      <path d="M603 683.500h662" stroke="#5a0000" />
      <path d="M706 660l23 13M693 660l36 17M702 670l30 14M727 660l7 4M686 667l24 12" stroke="#7a0c0c" />
      <path d="M668 660l24 11M668 667l24 10M672 674l22 9M664 661l-6 12M686 661l-6 12M692 660l-8 14" stroke="#0a8a1a" />
      <path
        d="M667 661l-5 8M660 669h6l-6 7M657 677l7-1-5 8M670 668h6M677 661v7M689 661l-4 9M680 661l5 9M671 672h10M677 670v9M684 670v9l-5 3M657 679l8-4M668 678l-6 6"
        stroke="#fff"
        strokeWidth="1.200"
      />
      <path d="M595 682.500h13M601.500 682v2M1260 682.500h13M1266.500 682v2" stroke="#fff" strokeWidth="1.500" />
    </svg>
  </main>
);

const EditorTool = ({ icon, label, disabled, caret, wide, slim }: ToolProps & { wide?: boolean; slim?: boolean }) => (
  <button
    type="button"
    disabled={disabled}
    className={clsx(
      'flex h-[22px] items-center gap-1 whitespace-nowrap rounded-sm border pl-1 disabled:text-[#b0b0b0]',
      caret ? 'border-transparent' : 'border-[#f8f8f8] pr-1',
    )}
  >
    <Icon name={icon} className={slim ? 'h-4 w-3.5' : 'size-4'} />
    {label}
    {caret && <Caret className={clsx('text-[#555]', wide ? 'w-3' : 'w-2')} />}
  </button>
);

const Separator = ({ tight }: { tight?: boolean }) => (
  <div className={clsx('ml-[3px] h-[18px] w-px bg-[#dcdcdc]', !tight && 'mr-0.5')} />
);

const Handle = ({ className }: { className?: string }) => (
  <svg viewBox="0 0 2 14" className={clsx('h-3.5 w-0.5 shrink-0', className)} aria-hidden="true">
    <path d="M0 0h2v2H0zM0 4h2v2H0zM0 8h2v2H0zM0 12h2v2H0z" fill="#111" />
  </svg>
);

const drawTools = [
  ['point', '点'],
  ['line', '直线'],
  ['rect', '矩形'],
  ['pentagon', '多边形'],
  ['arc', '弧'],
  ['circle', '圆'],
  ['text', '文字'],
];

const DrawToolStrip = () => (
  <div className="flex w-[43px] shrink-0 flex-col gap-[5px] border-r border-t border-[#c3c5cc] bg-white pl-1 pt-1.5">
    <svg viewBox="0 0 26 2" className="mb-px ml-1 h-0.5 w-[26px]" aria-hidden="true">
      <path d="M0 1h26" stroke="#111" strokeWidth="2" strokeDasharray="2 2" />
    </svg>
    {drawTools.map(([icon, title]) => (
      <div key={icon} className="flex items-center">
        <button
          type="button"
          aria-label={title}
          className={clsx(
            'flex h-[22px] shrink-0 items-center justify-center rounded-sm border',
            icon === 'line' && 'my-px border-[#58a6f2] bg-[#eaf4fe]',
            icon === 'arc' ? 'w-6 border-transparent' : 'w-[27px]',
            icon !== 'line' && icon !== 'arc' && 'border-[#f6f6f6]',
          )}
        >
          <Icon name={icon} />
        </button>
        {icon === 'arc' && <Caret className="w-2 text-[#555]" />}
      </div>
    ))}
  </div>
);

const xs = [407, 502, 597];
const ys = [38, 153, 267];

const SectionCanvas = () => (
  <div className="min-w-0 grow overflow-hidden bg-black">
    <svg className="h-full w-full" role="img" aria-label="截面图" fill="none" fontFamily='"Noto Sans", sans-serif'>
      <g stroke="#6f3434">
        {xs.map((x) => (
          <path key={x} d={`M${x - 1}.5 38v230`} />
        ))}
        {ys.map((y) => (
          <path key={y} d={`M407 ${y}.5h191`} />
        ))}
      </g>
      <g stroke="#006c00">
        {ys.map((y) => (
          <path key={y} d={`M264 ${y}.5h143`} />
        ))}
        <path d="M283.500 38v230" />
        {xs.map((x) => (
          <path key={x} d={`M${x - 1}.5 268v142`} />
        ))}
        <path d="M407 391.500h191" />
      </g>
      <g stroke="#009400">
        {ys.map((y) => (
          <path key={y} d={`M273 ${y + 10}l20-20`} />
        ))}
        {xs.map((x) => (
          <path key={x} d={`M${x - 10} 401l19-19`} />
        ))}
      </g>
      <g fill="#fff" fontSize="15" textAnchor="middle">
        <text x="311" y="101">120</text>
        <text x="311" y="215">120</text>
        <text x="454" y="368">100</text>
        <text x="549" y="368">100</text>
      </g>
      <path d="M390 250l34 34M424 250l-34 34" stroke="#f00" strokeWidth="3" />
      <path d="M48 346h4v14h-4zM50 334l5 12H45z" fill="#0f0" />
      <path d="M55 362h13v4H55zM81 364l-13 5v-10z" fill="#f00" />
      <circle cx="50" cy="364" r="5.500" fill="#0000c0" />
      <g fontSize="15" textAnchor="middle">
        <text x="50" y="334" fill="#0f0">Y</text>
        <text x="86" y="369" fill="#f00">X</text>
      </g>
    </svg>
  </div>
);

const statusTools = [
  { icon: 'snapBox', title: '捕捉', caret: true },
  { icon: 'inputPoint', title: '坐标输入', caret: true },
  { icon: 'blocks', title: '图元提示' },
  { icon: 'checkBox', title: '校验', caret: true },
  { icon: 'checkBulb', title: '校验提示' },
];

const StatusBar = () => (
  <footer className="flex h-[42px] shrink-0 items-center whitespace-nowrap bg-white pl-px">
    <span className="w-[156px] text-[13px]">X=-269 Y=-121</span>
    <span className="w-[66px] text-[13px]">0</span>
    <div className="flex gap-1.5">
      <button type="button" aria-label="正交" className="flex h-[25px] w-[25px] items-center justify-center border border-[#8f8f8f] bg-[#cfcfd1]">
        <Icon name="corner" />
      </button>
      {statusTools.map(({ icon, title, caret }) => (
        <button
          key={icon}
          type="button"
          aria-label={title}
          className={clsx(
            'flex h-[25px] items-center border border-[#2f93f6]',
            caret ? 'w-9 gap-1 pl-[3px]' : 'w-[25px] justify-center',
          )}
        >
          <Icon name={icon} />
          {caret && <Caret />}
        </button>
      ))}
    </div>
    <span className="ml-1.5 pt-0.5">指定第一点</span>
    <div className="ml-auto flex gap-1.5 pb-1 pr-1.5">
      <button type="button" className="h-[26px] w-20 rounded-sm bg-[#2d7ee0] pt-px text-white">
        确定
      </button>
      <button type="button" className="h-[26px] w-20 rounded-sm border border-[#c8c8c8] bg-white pt-px">
        取消
      </button>
    </div>
    <svg viewBox="0 0 8 8" className="mb-0.5 mr-px size-2 self-end" aria-hidden="true">
      <path d="M5 1h2v2H5zM5 5h2v2H5zM1 5h2v2H1z" fill="#777" />
    </svg>
  </footer>
);

const SectionEditor = () => (
  <div
    role="dialog"
    aria-label="异形截面编辑器"
    className="absolute bottom-6 left-[435px] right-0 top-[120px] flex flex-col border-b border-[#bcc6d8] bg-white text-[#333]"
  >
    <div className="flex h-[27px] shrink-0 items-center bg-[#2d7ee0] pl-[9px] text-white">
      <h1 className="mr-auto">异形截面编辑器</h1>
      <button type="button" aria-label="最大化" className="mr-5">
        <svg viewBox="0 0 8 8" className="size-2" aria-hidden="true">
          <path d="M.5 1.500h7v5.500h-7zM0 1h8" stroke="#fff" strokeWidth="1.200" fill="none" />
        </svg>
      </button>
      <button type="button" aria-label="关闭" className="mr-[3px]">
        <svg viewBox="0 0 8 8" className="size-2" aria-hidden="true">
          <path d="M.5.5l7 7M7.500.5l-7 7" stroke="#fff" strokeWidth="1.800" />
        </svg>
      </button>
    </div>

    <div className="flex min-h-0 grow flex-col border-l-2 border-[#bcc6d8]">
      <div className="flex h-[29px] shrink-0 items-center gap-px border-b-2 border-t border-[#c3c5cc] pl-[3px] pt-px">
        <Handle className="mr-[5px]" />
        <EditorTool icon="grid" label="设置网格" />
        <EditorTool icon="importDoc" label="导入" caret wide slim />
        <EditorTool icon="exportDoc" label="导出" slim />
        <Separator />
        <EditorTool icon="undo" label="撤消" disabled slim />
        <EditorTool icon="redo" label="恢复" disabled />
        <Separator tight />
        <EditorTool icon="cadSection" label="从CAD选择截面图" caret wide />
        <Separator />
        <EditorTool icon="insertPoint" label="设置插入点" />
      </div>

      <div className="flex h-[27px] shrink-0 items-center gap-px border-b border-[#c3c5cc] pl-[3px] pt-px">
        <Handle className="mr-[5px]" />
        <EditorTool icon="erase" label="删除" />
        <Separator />
        <EditorTool icon="copy" label="复制" />
        <EditorTool icon="mirror" label="镜像" />
        <EditorTool icon="move" label="移动" />
        <EditorTool icon="rotate" label="旋转" />
        <EditorTool icon="stretch" label="拉伸" />
        <Separator tight />
        <EditorTool icon="extend" label="延伸" caret slim />
        <EditorTool icon="breakLine" label="打断" caret />
        <Separator />
        <EditorTool icon="shield" label="截面校验" />
        <div className="-mt-px w-0.5 self-stretch bg-[#c3c5cc]" />
        <Handle className="ml-[3px] mr-0.5" />
        <EditorTool icon="parallel" label="平行" caret />
        <EditorTool icon="lockDim" label="长度标注" caret />
        <EditorTool icon="oneKey" label="一键标注" />
        <EditorTool icon="removeConstraint" label="删除约束" />
      </div>

      <div className="flex min-h-0 grow">
        <DrawToolStrip />
        <SectionCanvas />
      </div>
      <StatusBar />
    </div>
  </div>
);

const App = () => (
  <div className="relative flex h-screen flex-col overflow-hidden bg-white font-['Noto_Sans','Noto_Sans_CJK_SC',sans-serif] text-xs text-black">
    <Ribbon />
    <SelectorBar />
    <div className="flex min-h-0 grow">
      <NavTree />
      <ComponentPanels />
      <ModelView />
    </div>
    <SectionEditor />
  </div>
);

export default App;
